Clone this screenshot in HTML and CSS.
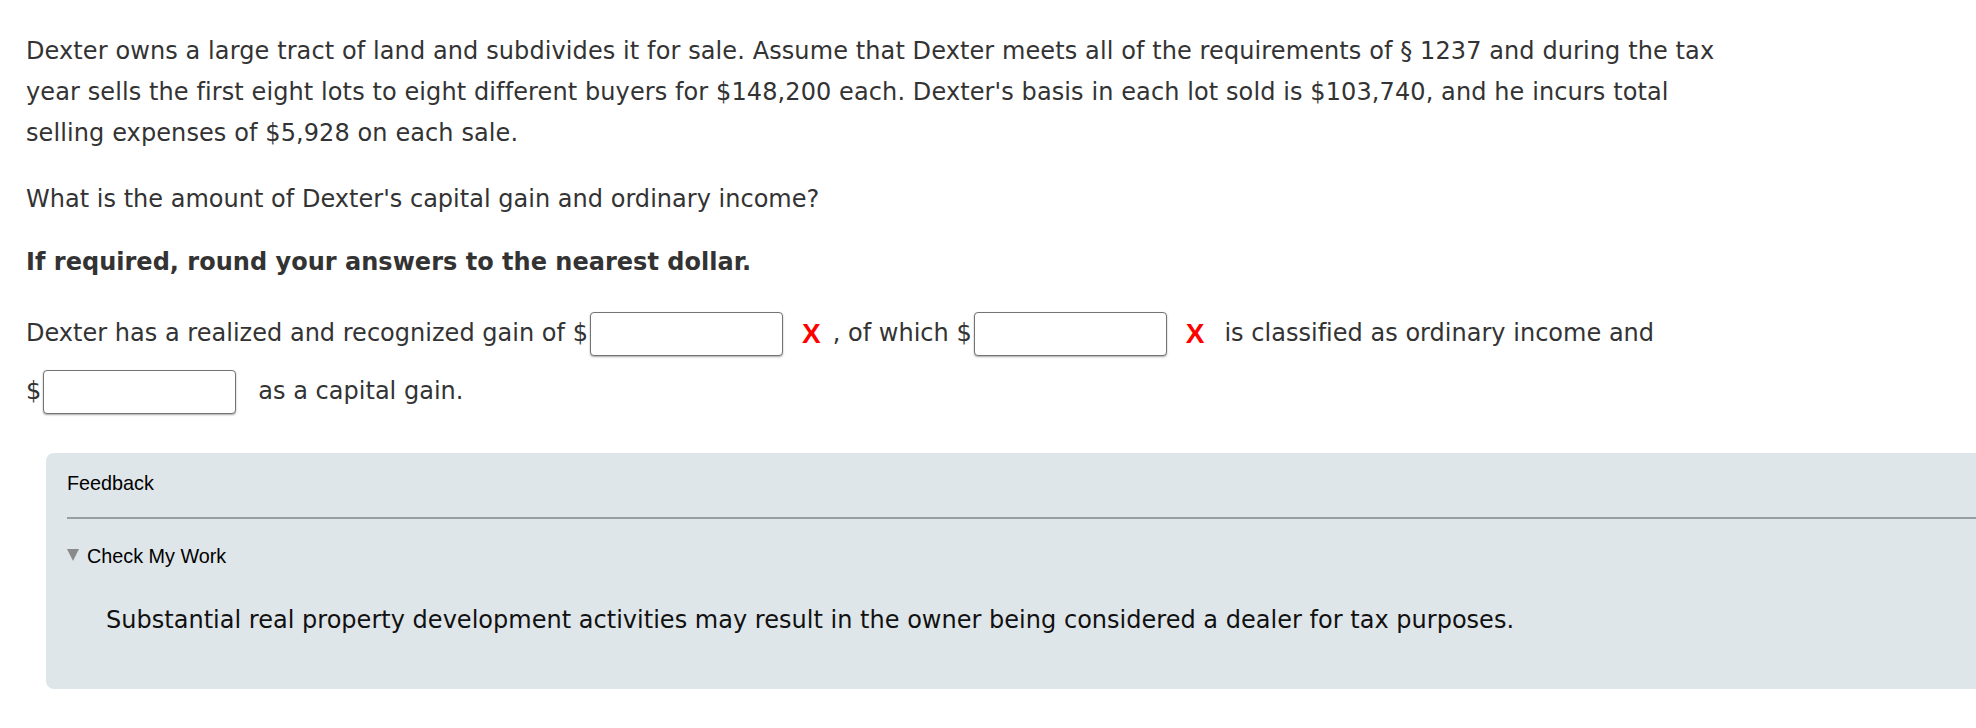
FILE: index.html
```html
<!DOCTYPE html>
<html lang="en">
<head>
<meta charset="utf-8">
<title>Question</title>
<link rel="stylesheet" href="styles.css">
</head>
<body>
<main class="question">
  <p class="stem">Dexter owns a large tract of land and subdivides it for sale. Assume that Dexter meets all of the requirements of § 1237 and during the tax year sells the first eight lots to eight different buyers for $148,200 each. Dexter's basis in each lot sold is $103,740, and he incurs total selling expenses of $5,928 on each sale.</p>
  <p class="ask">What is the amount of Dexter's capital gain and ordinary income?</p>
  <p class="note">If required, round your answers to the nearest dollar.</p>
  <div class="answer">
    <div class="row">
      <span class="txt">Dexter has a realized and recognized gain of $</span>
      <input class="field" type="text" aria-label="realized gain">
      <span class="mark">X</span>
      <span class="txt after-mark">, of which $</span>
      <input class="field" type="text" aria-label="ordinary income">
      <span class="mark">X</span>
      <span class="txt after-mark2">is classified as ordinary income and</span>
    </div>
    <div class="row">
      <span class="txt">$</span>
      <input class="field" type="text" aria-label="capital gain">
      <span class="txt after-field">as a capital gain.</span>
    </div>
  </div>
  <section class="feedback">
    <div class="fb-title">Feedback</div>
    <hr class="fb-rule">
    <div class="fb-toggle"><span class="tri"></span>Check My Work</div>
    <p class="fb-body">Substantial real property development activities may result in the owner being considered a dealer for tax purposes.</p>
  </section>
</main>
</body>
</html>
```

FILE: styles.css
```css
html, body {
  margin: 0;
  padding: 0;
  background: #ffffff;
}
.question {
  padding: 31px 0 0 26px;
  font-family: "DejaVu Sans", Verdana, sans-serif;
  font-size: 24px;
  line-height: 41px;
  letter-spacing: 0.02px;
  color: #333333;
}
.question p {
  margin: 0;
}
.stem {
  max-width: 1705px;
  letter-spacing: 0.1px;
}
.ask {
  margin-top: 24.5px !important;
}
.note {
  margin-top: 22px !important;
  font-weight: bold;
}
.answer {
  margin-top: 29px;
  display: flex;
  flex-direction: column;
  gap: 14px;
}
.row {
  display: flex;
  align-items: center;
  white-space: pre;
}
.field {
  box-sizing: border-box;
  width: 193px;
  height: 44px;
  margin: 0 0 0 2px;
  padding: 0 6px;
  border: 1px solid #747474;
  border-radius: 4px;
  box-shadow: 0 1px 2px rgba(0,0,0,0.35);
  background: #fff;
  font: inherit;
}
.mark {
  margin-left: 19px;
  font-family: "Liberation Sans", Arial, sans-serif;
  font-weight: bold;
  font-size: 28px;
  letter-spacing: 0;
  color: #ff0000;
  line-height: 41px;
}
.after-mark {
  margin-left: 12px;
}
.after-mark2 {
  margin-left: 20px;
}
.after-field {
  margin-left: 22px;
}
.feedback {
  margin: 39px 0 0 20px;
  padding: 19px 0 48px 21px;
  background: #dfe6e9;
  border-radius: 8px 0 0 8px;
  font-family: "Liberation Sans", Arial, sans-serif;
  font-size: 19.8px;
  line-height: 22px;
  letter-spacing: 0;
  color: #000;
}
.fb-title {
  margin: 0;
}
.fb-rule {
  margin: 23px 0 0 0;
  border: 0;
  height: 2px;
  background: #979fa3;
}
.fb-toggle {
  margin-top: 26.5px;
  display: flex;
  align-items: center;
}
.tri {
  width: 0;
  height: 0;
  border-left: 6px solid transparent;
  border-right: 6px solid transparent;
  border-top: 12px solid #8a8a8a;
  margin: 0 8px 2px 0;
  filter: blur(0.4px);
}
.feedback .fb-body {
  margin: 32.5px 0 0 39px;
  font-family: "DejaVu Sans", Verdana, sans-serif;
  font-size: 24px;
  line-height: 41px;
  letter-spacing: 0.02px;
  color: #111;
}
```
